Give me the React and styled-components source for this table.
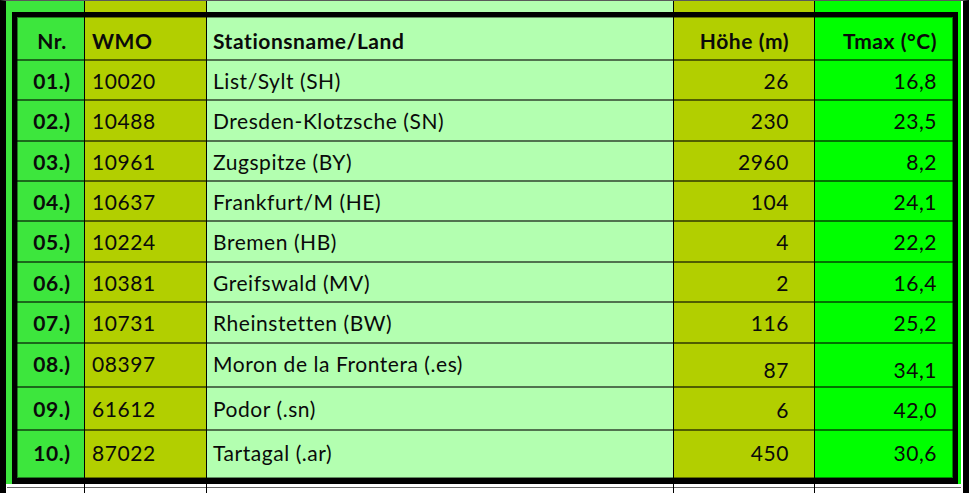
import React from 'react'
import styled, { createGlobalStyle } from 'styled-components'

const GlobalStyle = createGlobalStyle`
  html, body {
    margin: 0;
    padding: 0;
    background: #fff;
  }
  body {
    font-family: Lato, 'Open Sans', sans-serif;
    color: #0a0a0a;
  }
`

const GREEN = '#3de63d'
const OLIVE = '#b2cf00'
const LIGHT = '#b3ffb0'
const LIME = '#00ff00'
const LINE = 'rgba(0, 0, 0, 0.55)'

const Frame = styled.div`
  width: 969px;
  height: 493px;
  box-sizing: border-box;
  border-top: 1px solid #5a5a5a;
  border-left: 6px solid #000;
  border-right: 6px solid #000;
  padding: 11px 5px 0 6px;
  box-shadow: inset -2px 0 0 #fff;
  background:
    linear-gradient(
      to right,
      transparent 78px,
      #000 78px 79px,
      transparent 79px 200px,
      #000 200px 201px,
      transparent 201px 667px,
      #000 667px 668px,
      transparent 668px 808px,
      #000 808px 809px,
      transparent 809px
    ),
    linear-gradient(#6a6a6a, #6a6a6a) left 1px bottom 5px / calc(100% - 3px) 1px no-repeat,
    linear-gradient(#fff, #fff) bottom / 100% 9px no-repeat,
    linear-gradient(
      to right,
      ${GREEN} 78px,
      ${OLIVE} 78px 200px,
      ${LIGHT} 200px 667px,
      ${OLIVE} 667px 808px,
      ${LIME} 808px
    );
`

const Table = styled.div`
  width: 946px;
  box-sizing: border-box;
  border: 5px solid #000;
  border-bottom-width: 6px;
  box-shadow: inset 0 0 0 1px rgba(0, 0, 0, 0.45);
`

const Row = styled.div`
  display: grid;
  grid-template-columns: 67px 122px 467px 141px 139px;
  height: ${({ $h }) => $h}px;
  box-sizing: border-box;
  border-bottom: ${({ $last }) => ($last ? 'none' : `2px solid ${LINE}`)};
  font-size: 21px;
  letter-spacing: 0.55px;
  font-weight: ${({ $head }) => ($head ? 700 : 400)};
  padding-top: ${({ $head }) => ($head ? 4 : 0)}px;
`

const Cell = styled.div`
  display: flex;
  align-items: center;
  white-space: nowrap;
  transform: translateY(${({ $dy }) => $dy || 0}px);
`

const NrCell = styled(Cell)`
  justify-content: center;
  padding-left: 3px;
  font-weight: 700;
`

const WmoCell = styled(Cell)`
  padding-left: 8px;
`

const NameCell = styled(Cell)`
  padding-left: 7px;
`

const HeightCell = styled(Cell)`
  justify-content: flex-end;
  padding-right: 25px;
`

const TmaxCell = styled(Cell)`
  justify-content: flex-end;
  padding-right: 16px;
`

const stations = [
  ['01.)', '10020', 'List/Sylt (SH)', '26', '16,8', 40],
  ['02.)', '10488', 'Dresden-Klotzsche (SN)', '230', '23,5', 41],
  ['03.)', '10961', 'Zugspitze (BY)', '2960', '8,2', 40],
  ['04.)', '10637', 'Frankfurt/M (HE)', '104', '24,1', 40],
  ['05.)', '10224', 'Bremen (HB)', '4', '22,2', 41],
  ['06.)', '10381', 'Greifswald (MV)', '2', '16,4', 40],
  ['07.)', '10731', 'Rheinstetten (BW)', '116', '25,2', 41],
  ['08.)', '08397', 'Moron de la Frontera (.es)', '87', '34,1', 44, -2, 4],
  ['09.)', '61612', 'Podor (.sn)', '6', '42,0', 43, 0, 1],
  ['10.)', '87022', 'Tartagal (.ar)', '450', '30,6', 47, -2, -2],
]

export default function App() {
  return (
    <>
      <GlobalStyle />
      <Frame>
        <Table>
          <Row $h={44} $head>
            <NrCell>Nr.</NrCell>
            <WmoCell>WMO</WmoCell>
            <NameCell>Stationsname/Land</NameCell>
            <HeightCell>Höhe (m)</HeightCell>
            <TmaxCell>Tmax (°C)</TmaxCell>
          </Row>
          {stations.map(([nr, wmo, name, height, tmax, h, nameDy, numDy], i) => (
            <Row key={nr} $h={h} $last={i === stations.length - 1}>
              <NrCell $dy={nameDy}>{nr}</NrCell>
              <WmoCell $dy={nameDy}>{wmo}</WmoCell>
              <NameCell $dy={nameDy}>{name}</NameCell>
              <HeightCell $dy={numDy}>{height}</HeightCell>
              <TmaxCell $dy={numDy}>{tmax}</TmaxCell>
            </Row>
          ))}
        </Table>
      </Frame>
    </>
  )
}
